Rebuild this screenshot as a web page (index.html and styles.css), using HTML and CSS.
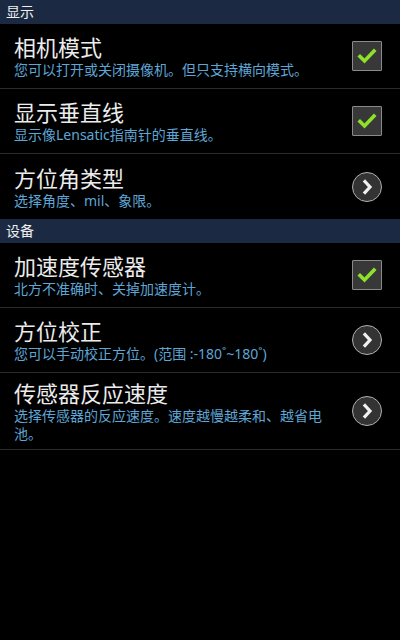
FILE: index.html
```html
<!DOCTYPE html>
<html lang="zh-CN">
<head>
  <meta charset="UTF-8" />
  <meta name="viewport" content="width=device-width, initial-scale=1" />
  <title>设置</title>
  <link rel="stylesheet" href="styles.css">
</head>
<body>
  <div class="settings">
    <div class="group-title">显示</div>

    <div class="item">
      <div class="text">
        <div class="title">相机模式</div>
        <div class="summary">您可以打开或关闭摄像机。但只支持横向模式。</div>
      </div>
      <div class="check">
        <svg viewBox="0 0 30 30" width="30" height="30"><path d="M8 15.5 L12.5 20 L22 10" /></svg>
      </div>
    </div>

    <div class="item">
      <div class="text">
        <div class="title">显示垂直线</div>
        <div class="summary">显示像Lensatic指南针的垂直线。</div>
      </div>
      <div class="check">
        <svg viewBox="0 0 30 30" width="30" height="30"><path d="M8 15.5 L12.5 20 L22 10" /></svg>
      </div>
    </div>

    <div class="item last">
      <div class="text">
        <div class="title">方位角类型</div>
        <div class="summary">选择角度、mil、象限。</div>
      </div>
      <div class="more">
        <svg viewBox="0 0 30 30" width="30" height="30"><path d="M13 9.5 L18 15 L13 20.5" /></svg>
      </div>
    </div>

    <div class="group-title">设备</div>

    <div class="item">
      <div class="text">
        <div class="title">加速度传感器</div>
        <div class="summary">北方不准确时、关掉加速度计。</div>
      </div>
      <div class="check">
        <svg viewBox="0 0 30 30" width="30" height="30"><path d="M8 15.5 L12.5 20 L22 10" /></svg>
      </div>
    </div>

    <div class="item">
      <div class="text">
        <div class="title">方位校正</div>
        <div class="summary">您可以手动校正方位。(范围 :-180˚~180˚)</div>
      </div>
      <div class="more">
        <svg viewBox="0 0 30 30" width="30" height="30"><path d="M13 9.5 L18 15 L13 20.5" /></svg>
      </div>
    </div>

    <div class="item">
      <div class="text">
        <div class="title">传感器反应速度</div>
        <div class="summary">选择传感器的反应速度。速度越慢越柔和、越省电池。</div>
      </div>
      <div class="more">
        <svg viewBox="0 0 30 30" width="30" height="30"><path d="M13 9.5 L18 15 L13 20.5" /></svg>
      </div>
    </div>
  </div>
</body>
</html>
```

FILE: styles.css
```css
body {
  margin: 0;
  height: 640px;
  background: #000;
  font-family: 'Noto Sans', 'Noto Sans CJK SC', sans-serif;
}

.group-title {
  height: 24px;
  line-height: 24px;
  padding-left: 6px;
  font-size: 14px;
  color: #f0f0f0;
  background: #1b2a42;
}

.item {
  display: flex;
  align-items: center;
  gap: 20px;
  min-height: 64px;
  padding: 0 18px 0 14px;
  border-bottom: 1px solid #2b2b2b;
}

.item.last {
  border-bottom: none;
  min-height: 65px;
}

.text {
  flex: 1;
  padding: 6px 0;
}

.title {
  font-size: 22px;
  line-height: 28px;
  color: #ececec;
}

.summary {
  font-size: 14px;
  line-height: 18px;
  color: #5ea6d6;
}

.check {
  width: 28px;
  height: 28px;
  border: 1px solid #8a8a8a;
  border-radius: 1px;
  background: #383838;
}

.check svg {
  display: block;
  margin: -1px;
}

.check path {
  fill: none;
  stroke: #8ee02a;
  stroke-width: 3.6;
  stroke-linecap: square;
  stroke-linejoin: miter;
}

.more {
  width: 28px;
  height: 28px;
  border: 1px solid #b0b0b0;
  border-radius: 50%;
  background: #333;
}

.more svg {
  display: block;
  margin: -1px;
}

.more path {
  fill: none;
  stroke: #f0f0f0;
  stroke-width: 3.2;
  stroke-linecap: square;
}
```
